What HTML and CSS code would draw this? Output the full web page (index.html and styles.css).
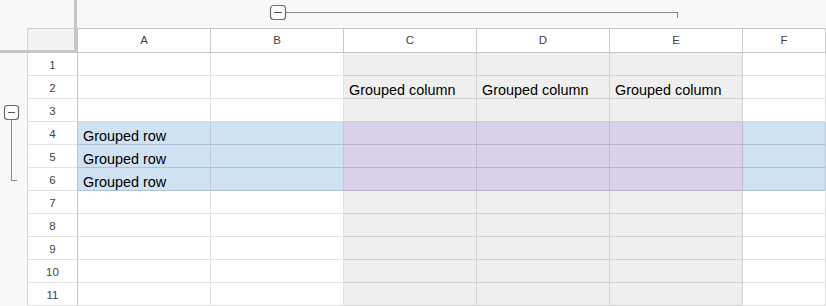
FILE: index.html
```html
<!DOCTYPE html>
<html>
<head>
<meta charset="utf-8">
<link rel="stylesheet" href="styles.css">
</head>
<body>
<div class="sheet">
  <div class="gutter"></div>
  <div class="gutter corner-top"></div>
  <div class="colgroup">
    <svg width="748" height="28" viewBox="0 0 748 28">
      <line x1="207" y1="12.5" x2="599.5" y2="12.5" stroke="#8a8a8a" stroke-width="1"/>
      <line x1="599.5" y1="12" x2="599.5" y2="18" stroke="#8a8a8a" stroke-width="1"/>
      <rect x="192.5" y="5.5" width="15" height="14" rx="3" fill="#fff" stroke="#6a6a6a" stroke-width="1.2"/>
      <line x1="196" y1="12.5" x2="204" y2="12.5" stroke="#555" stroke-width="1"/>
    </svg>
  </div>

  <div class="gutter corner-left"></div>
  <div class="corner"></div>
  <div class="colhead">A</div>
  <div class="colhead">B</div>
  <div class="colhead">C</div>
  <div class="colhead">D</div>
  <div class="colhead">E</div>
  <div class="colhead">F</div>

  <div class="rowgroup">
    <svg width="27" height="253" viewBox="0 0 27 253">
      <line x1="11.5" y1="66" x2="11.5" y2="127.5" stroke="#8a8a8a" stroke-width="1"/>
      <line x1="11" y1="127.5" x2="17" y2="127.5" stroke="#8a8a8a" stroke-width="1"/>
      <rect x="4.5" y="52.5" width="14" height="14" rx="3" fill="#fff" stroke="#6a6a6a" stroke-width="1.2"/>
      <line x1="8" y1="59.5" x2="15" y2="59.5" stroke="#555" stroke-width="1"/>
    </svg>
  </div>

  <div class="rownum">1</div>
  <div class="cell"></div><div class="cell"></div><div class="cell gray"></div><div class="cell gray"></div><div class="cell gray"></div><div class="cell"></div>

  <div class="rownum">2</div>
  <div class="cell"></div><div class="cell"></div><div class="cell gray">Grouped column</div><div class="cell gray">Grouped column</div><div class="cell gray">Grouped column</div><div class="cell"></div>

  <div class="rownum">3</div>
  <div class="cell pre"></div><div class="cell pre"></div><div class="cell gray pre"></div><div class="cell gray pre"></div><div class="cell gray pre"></div><div class="cell pre"></div>

  <div class="rownum">4</div>
  <div class="cell blue">Grouped row</div><div class="cell blue"></div><div class="cell purple"></div><div class="cell purple"></div><div class="cell purple"></div><div class="cell blue"></div>

  <div class="rownum">5</div>
  <div class="cell blue">Grouped row</div><div class="cell blue"></div><div class="cell purple"></div><div class="cell purple"></div><div class="cell purple"></div><div class="cell blue"></div>

  <div class="rownum">6</div>
  <div class="cell blue">Grouped row</div><div class="cell blue"></div><div class="cell purple"></div><div class="cell purple"></div><div class="cell purple"></div><div class="cell blue"></div>

  <div class="rownum">7</div>
  <div class="cell"></div><div class="cell"></div><div class="cell gray"></div><div class="cell gray"></div><div class="cell gray"></div><div class="cell"></div>

  <div class="rownum">8</div>
  <div class="cell"></div><div class="cell"></div><div class="cell gray"></div><div class="cell gray"></div><div class="cell gray"></div><div class="cell"></div>

  <div class="rownum">9</div>
  <div class="cell"></div><div class="cell"></div><div class="cell gray"></div><div class="cell gray"></div><div class="cell gray"></div><div class="cell"></div>

  <div class="rownum">10</div>
  <div class="cell"></div><div class="cell"></div><div class="cell gray"></div><div class="cell gray"></div><div class="cell gray"></div><div class="cell"></div>

  <div class="rownum">11</div>
  <div class="cell"></div><div class="cell"></div><div class="cell gray"></div><div class="cell gray"></div><div class="cell gray"></div><div class="cell"></div>
</div>
</body>
</html>
```

FILE: styles.css
```css
* { box-sizing: border-box; }
html, body {
  margin: 0;
  padding: 0;
  background: #f8f8f9;
  overflow: hidden;
}
body {
  font-family: "Liberation Sans", Arial, Helvetica, sans-serif;
  color: #000;
}
.sheet {
  display: grid;
  grid-template-columns: 27px 51px repeat(5, 133px) 1fr;
  grid-template-rows: 28px 25px repeat(11, 23px);
  width: 826px;
  height: 306px;
}
.gutter { background: #f8f8f9; }
.corner-top {
  border-right: 3px solid #c6c6c6;
  margin-right: 1px;
}
.corner-left {
  border-bottom: 3px solid #c6c6c6;
}
.colgroup {
  grid-column: 3 / 9;
  background: #f8f8f9;
  display: flex;
}
.colgroup svg, .rowgroup svg { display: block; }
.corner {
  background: #f3f3f3;
  border-left: 1px solid #d4d4d4;
  border-top: 1px solid #d4d4d4;
  border-right: 4px solid #c6c6c6;
  border-bottom: 3px solid #c6c6c6;
}
.colhead {
  background: #fff;
  border-top: 1px solid #c9c9c9;
  border-right: 1px solid #c9c9c9;
  border-bottom: 1px solid #c4c4c4;
  display: flex;
  align-items: center;
  justify-content: center;
  padding-bottom: 1px;
  font-size: 11.5px;
  color: #444;
}
.rowgroup {
  grid-row: 3 / 14;
  grid-column: 1;
  background: #f8f8f9;
}
.rownum {
  background: #fff;
  border-left: 1px solid #d4d4d4;
  border-right: 1px solid #c4c4c4;
  border-bottom: 1px solid #e2e2e2;
  display: flex;
  align-items: center;
  justify-content: center;
  padding-top: 1px;
  font-size: 11.5px;
  color: #444;
}
.cell {
  background: #fff;
  border-right: 1px solid rgba(0, 0, 0, 0.11);
  border-bottom: 1px solid rgba(0, 0, 0, 0.11);
  display: flex;
  align-items: flex-end;
  padding: 0 5px 0;
  font-size: 14.4px;
  line-height: 16px;
  white-space: nowrap;
  overflow: hidden;
}
.gray { background: #efefef; }
.blue {
  background: #cfe2f3;
  border-bottom-color: rgba(40, 50, 80, 0.18);
}
.purple {
  background: #d9d2e9;
  border-bottom-color: rgba(40, 30, 80, 0.16);
  border-right-color: rgba(40, 30, 80, 0.14);
}
.pre { border-bottom-color: rgba(40, 50, 80, 0.18); }
```
